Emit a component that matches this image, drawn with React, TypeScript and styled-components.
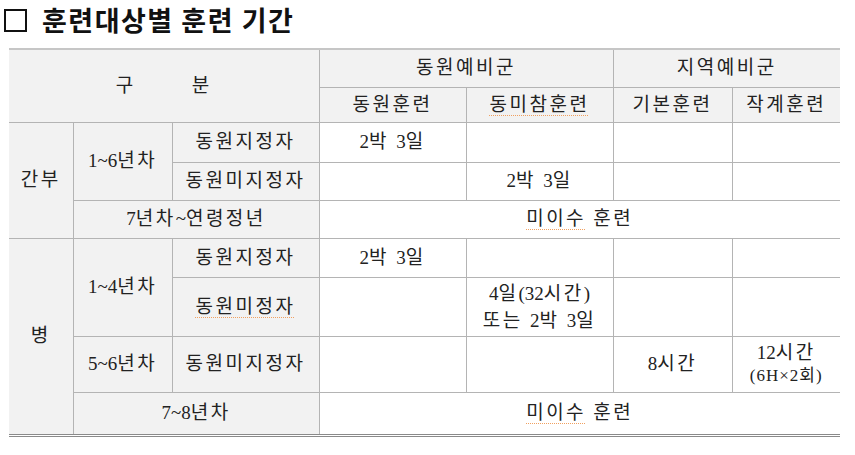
import React from "react";
import styled, { createGlobalStyle } from "styled-components";

const GlobalStyle = createGlobalStyle`
  html, body {
    margin: 0;
    padding: 0;
    background: #ffffff;
  }
  body {
    font-family: "Liberation Serif", "Noto Sans CJK KR", serif;
    color: #222;
  }
`;

const Page = styled.div`
  width: 855px;
  height: 455px;
  padding: 0 0 0 9px;
  box-sizing: border-box;
`;

const Title = styled.h1`
  display: flex;
  align-items: center;
  gap: 15px;
  margin: 0 0 9px -5px;
  line-height: normal;
  font-family: "Noto Sans CJK KR", sans-serif;
  font-weight: 700;
  font-size: 27px;
  letter-spacing: 1.5px;
  color: #111;
`;

const Box = styled.span`
  width: 19px;
  height: 19px;
  border: 2px solid #111;
  margin-top: 2px;
`;

const Table = styled.table`
  width: 831px;
  border-collapse: collapse;
  table-layout: fixed;
  border-top: 2px solid #c6c6c6;
  border-bottom: 3px double #8a8a8a;
`;

const Row = styled.tr<{ $h: number }>`
  height: ${(p) => p.$h}px;
`;

const Cell = styled.td<{ $shade?: boolean; $lh?: number }>`
  border: 1px solid #b4b4b4;
  background: ${(p) => (p.$shade ? "#f2f2f2" : "#ffffff")};
  text-align: center;
  vertical-align: middle;
  padding: 0;
  font-size: 19px;
  font-weight: 400;
  letter-spacing: 2.5px;
  line-height: ${(p) => p.$lh ?? 22}px;
  color: #222;

  &:first-child {
    border-left: none;
  }
  &:last-child {
    border-right: none;
  }
`;

const Spread = styled.span`
  display: inline-flex;
  gap: 56px;
`;

const Squiggle = styled.span`
  text-decoration: underline dotted #f0a060;
  text-underline-offset: 4px;
  text-decoration-thickness: 1px;
`;

/* Latin digits sit tight, only the Hangul is tracked */
const L = styled.span`
  letter-spacing: 0;
`;

const Small = styled.span`
  font-size: 17px;
  letter-spacing: 1px;
`;

const widths = [64, 99, 147, 147, 147, 119, 108];

const TwoNightsThreeDays = () => (
  <>
    <L>2</L>박 <L>3</L>일
  </>
);

export default function App() {
  return (
    <Page>
      <GlobalStyle />
      <Title>
        <Box />
        <span>훈련대상별 훈련 기간</span>
      </Title>
      <Table>
        <colgroup>
          {widths.map((w, i) => (
            <col key={i} style={{ width: w }} />
          ))}
        </colgroup>
        <tbody>
          <Row $h={38}>
            <Cell as="th" $shade colSpan={3} rowSpan={2}>
              <Spread>
                <span>구</span>
                <span>분</span>
              </Spread>
            </Cell>
            <Cell as="th" $shade colSpan={2}>
              동원예비군
            </Cell>
            <Cell as="th" $shade colSpan={2}>
              지역예비군
            </Cell>
          </Row>
          <Row $h={35}>
            <Cell $shade>동원훈련</Cell>
            <Cell $shade>
              <Squiggle>동미참훈련</Squiggle>
            </Cell>
            <Cell $shade>기본훈련</Cell>
            <Cell $shade>작계훈련</Cell>
          </Row>

          <Row $h={40}>
            <Cell $shade rowSpan={3}>
              간부
            </Cell>
            <Cell $shade rowSpan={2}>
              <L>1~6</L>년차
            </Cell>
            <Cell $shade>동원지정자</Cell>
            <Cell>
              <TwoNightsThreeDays />
            </Cell>
            <Cell />
            <Cell />
            <Cell />
          </Row>
          <Row $h={38}>
            <Cell $shade>동원미지정자</Cell>
            <Cell />
            <Cell>
              <TwoNightsThreeDays />
            </Cell>
            <Cell />
            <Cell />
          </Row>
          <Row $h={38}>
            <Cell $shade colSpan={2}>
              <L>7</L>년차<L>~</L>연령정년
            </Cell>
            <Cell colSpan={4}>
              <Squiggle>미이수</Squiggle> 훈련
            </Cell>
          </Row>

          <Row $h={39}>
            <Cell $shade rowSpan={4}>
              병
            </Cell>
            <Cell $shade rowSpan={2}>
              <L>1~4</L>년차
            </Cell>
            <Cell $shade>동원지정자</Cell>
            <Cell>
              <TwoNightsThreeDays />
            </Cell>
            <Cell />
            <Cell />
            <Cell />
          </Row>
          <Row $h={59}>
            <Cell $shade>
              <Squiggle>동원미정자</Squiggle>
            </Cell>
            <Cell />
            <Cell $lh={27}>
              <L>4</L>일<L>(32</L>시간<L>)</L>
              <br />
              또는 <TwoNightsThreeDays />
            </Cell>
            <Cell />
            <Cell />
          </Row>
          <Row $h={56}>
            <Cell $shade>
              <L>5~6</L>년차
            </Cell>
            <Cell $shade>동원미지정자</Cell>
            <Cell />
            <Cell />
            <Cell>
              <L>8</L>시간
            </Cell>
            <Cell>
              <L>12</L>시간
              <br />
              <Small>(6H×2회)</Small>
            </Cell>
          </Row>
          <Row $h={43}>
            <Cell $shade colSpan={2}>
              <L>7~8</L>년차
            </Cell>
            <Cell colSpan={4}>
              <Squiggle>미이수</Squiggle> 훈련
            </Cell>
          </Row>
        </tbody>
      </Table>
    </Page>
  );
}
